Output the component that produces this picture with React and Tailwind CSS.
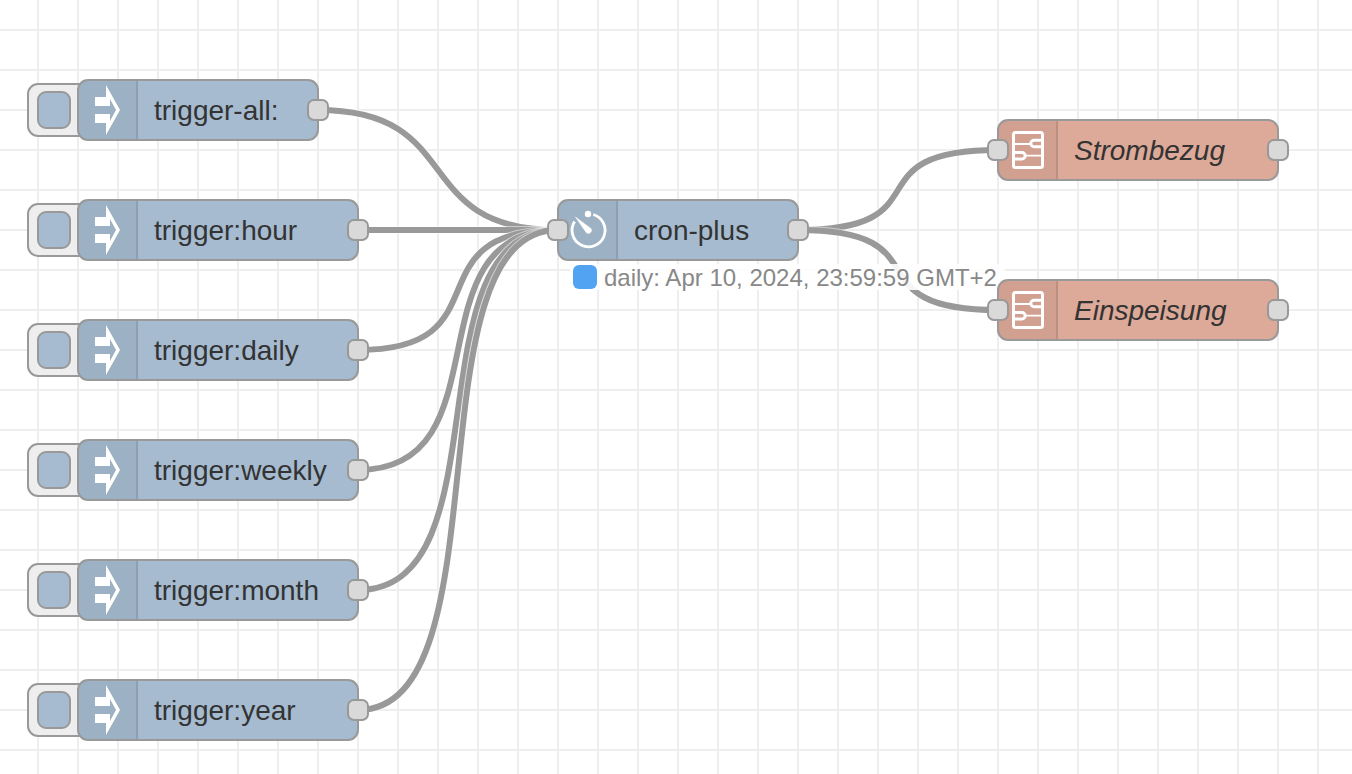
import { useState } from "react";

const triggers = [
  { id: "all", label: "trigger-all:", x: 78, y: 80, w: 240 },
  { id: "hour", label: "trigger:hour", x: 78, y: 200, w: 280 },
  { id: "daily", label: "trigger:daily", x: 78, y: 320, w: 280 },
  { id: "weekly", label: "trigger:weekly", x: 78, y: 440, w: 280 },
  { id: "month", label: "trigger:month", x: 78, y: 560, w: 280 },
  { id: "year", label: "trigger:year", x: 78, y: 680, w: 280 },
];

const cron = { id: "cron", label: "cron-plus", x: 558, y: 200, w: 240 };

const subflows = [
  { id: "bezug", label: "Strombezug", x: 998, y: 120, w: 280 },
  { id: "einspeisung", label: "Einspeisung", x: 998, y: 280, w: 280 },
];

const wires = [
  ...triggers.map((t) => ({ from: t, to: cron })),
  ...subflows.map((s) => ({ from: cron, to: s })),
];

const NODE_H = 60;
const CURVE = 150;

const wirePath = (from, to) => {
  const x1 = from.x + from.w;
  const y1 = from.y + NODE_H / 2;
  const x2 = to.x;
  const y2 = to.y + NODE_H / 2;
  return `M ${x1} ${y1} C ${x1 + CURVE} ${y1} ${x2 - CURVE} ${y2} ${x2} ${y2}`;
};

const InjectIcon = () => (
  <svg viewBox="0 0 60 60" className="size-full" aria-hidden="true">
    <path d="M17 17h11V5l14 25-14 25V43H17v-9h15v7l6-11-6-11v7H17z" fill="#fff" />
  </svg>
);

const TimerIcon = () => (
  <svg viewBox="0 0 60 60" className="size-full" aria-hidden="true">
    <path d="M35.3 14.5A16.5 16.5 0 1 1 16.6 21.500" fill="none" stroke="#fff" strokeWidth="2.8" />
    <circle cx="30" cy="14" r="3.200" fill="#fff" />
    <path d="M17.5 17L32.6 28.300A3 3 0 0 1 28.200 32.500z" fill="#fff" stroke="#fff" strokeWidth="0.5" strokeLinejoin="round" />
  </svg>
);

const SubflowIcon = () => (
  <svg viewBox="0 0 60 60" className="size-full" aria-hidden="true">
    <g fill="none" stroke="#fff" strokeWidth="3">
      <rect x="15.5" y="12.5" width="29" height="35" rx="2" />
      <path d="M44 20.300h-8a3.200 3.200 0 0 0 0 6.400h8M16 32.500h8a3.200 3.200 0 0 1 0 6.400h-8" />
      <path d="M16 24h17M27 35.700h17" strokeWidth="1.8" />
    </g>
  </svg>
);

const Port = ({ side }) => (
  <span
    className={`absolute top-[19px] size-[22px] rounded-[7px] border-2 border-[#999] bg-[#d9d9d9] ${
      side === "left" ? "-left-[11px]" : "-right-[11px]"
    }`}
  />
);

const Node = ({ node, icon, color, italic, input, output }) => (
  <div className="absolute h-[60px]" style={{ left: node.x, top: node.y, width: node.w }}>
    <div className={`absolute -inset-px flex overflow-hidden rounded-[11px] border-2 border-[#999] ${color}`}>
      <div className="h-full w-[59px] shrink-0 border-r-2 border-black/10 bg-black/5">
        <div className="-mt-px -ml-px size-[60px]">{icon}</div>
      </div>
      <span
        className={`flex items-center pt-0.5 pl-4 text-[28px] leading-8 whitespace-nowrap text-[#333] ${
          italic ? "italic" : ""
        }`}
      >
        {node.label}
      </span>
    </div>
    {input && <Port side="left" />}
    {output && <Port side="right" />}
  </div>
);

const TriggerButton = ({ node, onClick }) => (
  <button
    type="button"
    aria-label={`Inject ${node.label}`}
    onClick={onClick}
    className="absolute flex h-[54px] w-16 items-center rounded-[11px] border-2 border-[#999] bg-[#eee] pl-2"
    style={{ left: node.x - 51, top: node.y + 3 }}
  >
    <span className="h-[38px] w-[34px] rounded-[9px] border-2 border-[#999] bg-[#a6bbcf]" />
  </button>
);

const App = () => {
  const [status, setStatus] = useState("daily: Apr 10, 2024, 23:59:59 GMT+2");

  return (
    <main className="relative h-screen min-h-[774px] w-full overflow-hidden bg-white font-['Liberation_Sans',Arial,sans-serif]">
      {/* wires */}
      <svg className="absolute inset-0 size-full" aria-hidden="true">
        <defs>
          <pattern id="grid" x="37" y="29" width="40" height="40" patternUnits="userSpaceOnUse">
            <path d="M0 1H40M1 0V40" stroke="#eee" strokeWidth="2" />
          </pattern>
        </defs>
        <rect width="100%" height="100%" fill="url(#grid)" />
        {wires.map(({ from, to }) => (
          <g key={`${from.id}-${to.id}`} fill="none">
            <path d={wirePath(from, to)} stroke="#fff" strokeOpacity="0.5" strokeWidth="8" />
            <path d={wirePath(from, to)} stroke="#999" strokeWidth="6" />
          </g>
        ))}
      </svg>

      {/* inject nodes */}
      {triggers.map((t) => (
        <div key={t.id}>
          <TriggerButton node={t} onClick={() => setStatus(t.label)} />
          <Node node={t} icon={<InjectIcon />} color="bg-[#a6bbcf]" output />
        </div>
      ))}

      <Node node={cron} icon={<TimerIcon />} color="bg-[#a6bbcf]" input output />

      {/* node status */}
      <div className="absolute top-[264px] left-[570px] flex h-[26px] items-center gap-[7px] bg-white/90 pr-2 pl-[3px] text-2xl leading-[26px] whitespace-nowrap text-[#888]">
        <span className="size-6 rounded-md bg-[#53a3f3]" />
        <span className="pt-0.5">{status}</span>
      </div>

      {subflows.map((s) => (
        <Node key={s.id} node={s} icon={<SubflowIcon />} color="bg-[#dda998]" italic input output />
      ))}
    </main>
  );
};

export default App;
